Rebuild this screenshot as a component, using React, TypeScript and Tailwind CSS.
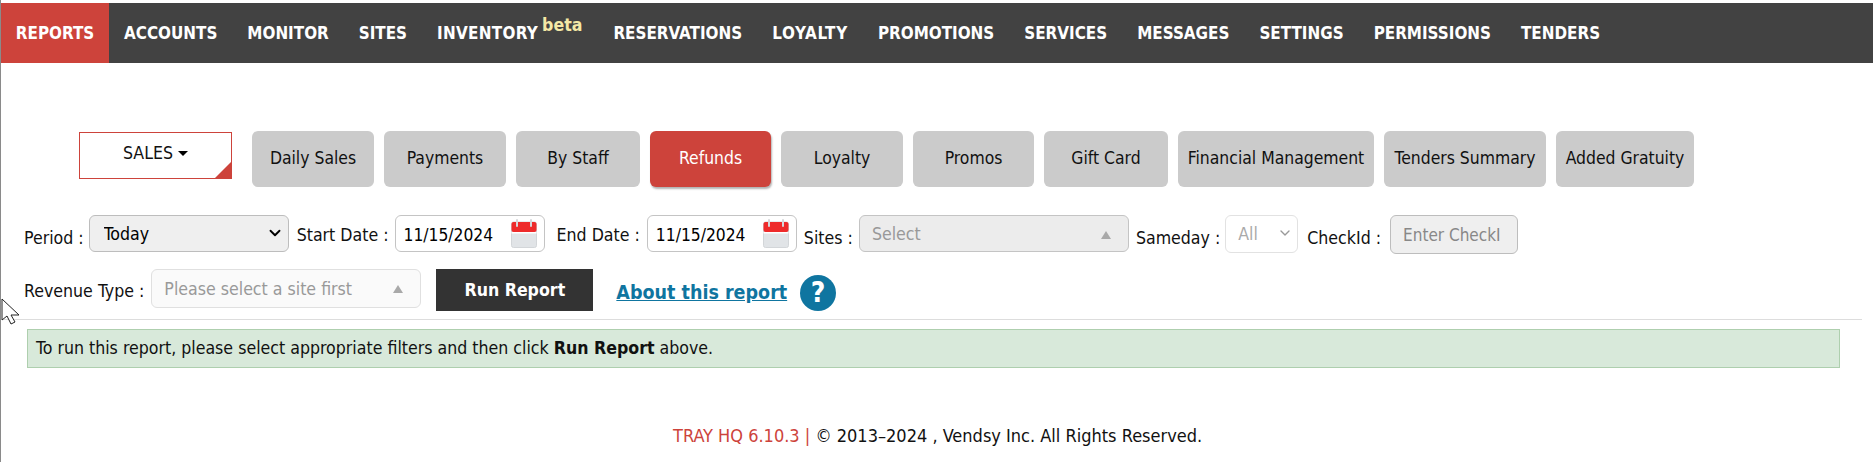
import React from 'react';
import { ChevronDown } from 'lucide-react';

const navItems = [
  { label: 'ACCOUNTS' },
  { label: 'MONITOR' },
  { label: 'SITES' },
  { label: 'INVENTORY', className: 'tracking-[0.3px]' },
  { label: 'RESERVATIONS' },
  { label: 'LOYALTY', className: 'tracking-[0.7px]' },
  { label: 'PROMOTIONS' },
  { label: 'SERVICES' },
  { label: 'MESSAGES' },
  { label: 'SETTINGS' },
  { label: 'PERMISSIONS' },
  { label: 'TENDERS' },
];

const tabs = [
  { label: 'Daily Sales', width: 'w-[122px]' },
  { label: 'Payments', width: 'w-[122px]' },
  { label: 'By Staff', width: 'w-[124px]' },
  { label: 'Refunds', width: 'w-[121px]', active: true },
  { label: 'Loyalty', width: 'w-[122px]' },
  { label: 'Promos', width: 'w-[121px]' },
  { label: 'Gift Card', width: 'w-[124px]' },
  { label: 'Financial Management', width: 'w-[196px]' },
  { label: 'Tenders Summary', width: 'w-[162px]' },
  { label: 'Added Gratuity', width: 'w-[138px]' },
];

const CalendarIcon = () => (
  <svg width="26" height="29" viewBox="0 0 26 29" className="absolute right-[8px] top-[4px]">
    <rect x="0.5" y="3" width="25" height="25.5" rx="2" fill="#e1e4e7" stroke="#d3d6d9" />
    <rect x="0.5" y="3" width="25" height="10" rx="2" fill="#ee2b2b" />
    <rect x="0.5" y="13" width="25" height="1.5" fill="#ffffff" />
    <rect x="5" y="0" width="2" height="8" rx="1" fill="#d5d7da" />
    <rect x="19" y="0" width="2" height="8" rx="1" fill="#d5d7da" />
  </svg>
);

const DateField = ({ value }: { value: string }) => (
  <div className="relative">
    <input
      readOnly
      value={value}
      className="w-[150px] h-[37px] pl-[8px] pt-[2px] bg-white border border-[#c4c4c4] rounded-[6px] text-[17.3px] text-black outline-none"
    />
    <CalendarIcon />
  </div>
);

const Caret = () => (
  <svg width="10" height="8" viewBox="0 0 10 8" className="absolute right-[17px] top-[15px]">
    <path d="M5 0 L10 8 L0 8 Z" fill="#a9a9a9" />
  </svg>
);

export default function App() {
  return (
    <div className="relative w-[1873px] h-[462px] bg-white border-l border-[#8a8a8a] overflow-hidden text-[17.6px] text-[#111] font-['DejaVu_Sans_Condensed','Liberation_Sans',sans-serif]">
      {/* Top nav */}
      <div className="mt-[3px] h-[60px] bg-[#424242] flex items-center text-white text-[16.9px] font-bold">
        <div className="h-full w-[108px] pt-[1px] bg-[#cd433b] flex items-center justify-center">REPORTS</div>
        <div className="flex items-center pt-[1px]">
          {navItems.map((item) => (
            <div key={item.label} className={`relative px-[15px] flex items-center ${item.className ?? ''}`}>
              {item.label}
              {item.label === 'INVENTORY' && (
                <span className="ml-[4px] mr-[1px] -mt-[17px] tracking-normal font-bold text-[#f4e8a6] text-[17.6px]">beta</span>
              )}
            </div>
          ))}
        </div>
      </div>

      {/* Report tabs */}
      <div className="mt-[68px] pl-[78px] flex items-start">
        <button className="relative mt-[1px] mr-[20px] w-[153px] h-[47px] border border-[#cd433b] bg-white flex items-center justify-center gap-[5px] overflow-hidden text-[17.6px] text-[#111]">
          <span className="-mt-[4px]">SALES</span>
          <span className="-mt-[4px] w-0 h-0 border-x-[5px] border-x-transparent border-t-[5px] border-t-black" />
          <span className="absolute right-0 bottom-0 w-0 h-0 border-l-[16px] border-l-transparent border-b-[16px] border-b-[#cd433b]" />
        </button>
        <div className="flex gap-[10px]">
          {tabs.map((tab) =>
            tab.active ? (
              <button key={tab.label} className={`${tab.width} h-[56px] pb-[2px] rounded-[6px] bg-[#cd433b] text-white text-[17.4px] shadow-[1px_2px_2px_rgba(0,0,0,0.3)]`}>
                {tab.label}
              </button>
            ) : (
              <button key={tab.label} className={`${tab.width} h-[56px] pb-[2px] rounded-[6px] bg-[#cbcbcb] text-[#111] text-[17.4px]`}>
                {tab.label}
              </button>
            )
          )}
        </div>
      </div>

      {/* Filters */}
      <div className="mt-[28px] pl-[23px] flex items-start">
        <span className="mt-[10px] mr-[5px]">Period :</span>
        <div className="relative mr-[8px]">
          <select className="appearance-none w-[200px] h-[37px] pl-[14px] pt-[2px] bg-[#efefef] border border-[#bdbdbd] rounded-[6px] text-[17.6px] text-black outline-none">
            <option>Today</option>
          </select>
          <ChevronDown className="absolute right-[5px] top-[9px] w-[18px] h-[18px] text-black" strokeWidth={2.5} />
        </div>
        <span className="mt-[7px] mr-[6px]">Start Date :</span>
        <div className="mr-[12px]"><DateField value="11/15/2024" /></div>
        <span className="mt-[7px] mr-[7px]">End Date :</span>
        <div className="mr-[7px]"><DateField value="11/15/2024" /></div>
        <span className="mt-[10px] mr-[6px]">Sites :</span>
        <div className="relative mr-[7px] w-[270px] h-[37px] pl-[12px] pt-[2px] flex items-center bg-[#ececec] border border-[#c4c4c4] rounded-[6px] text-[#999]">
          Select
          <Caret />
        </div>
        <span className="mt-[10px] mr-[5px]">Sameday :</span>
        <div className="relative mr-[9px]">
          <select disabled className="appearance-none w-[73px] h-[38px] pl-[12px] bg-white border border-[#e2e2e2] rounded-[6px] text-[17.6px] text-[#aaa] outline-none opacity-100">
            <option>All</option>
          </select>
          <ChevronDown className="absolute right-[5px] top-[10px] w-[16px] h-[16px] text-[#999]" />
        </div>
        <span className="mt-[10px] mr-[9px]">CheckId :</span>
        <input
          disabled
          placeholder="Enter CheckI"
          className="w-[128px] h-[39px] pl-[12px] bg-[#efefef] border border-[#bdbdbd] rounded-[6px] text-[17px] placeholder:text-[#888] outline-none"
        />
      </div>

      <div className="mt-[15px] pl-[23px] flex items-start">
        <span className="mt-[9px] mr-[7px]">Revenue Type :</span>
        <div className="relative mr-[15px] w-[270px] h-[39px] pl-[12px] pt-[2px] flex items-center bg-[#fafafa] border border-[#e0e0e0] rounded-[6px] text-[#999]">
          Please select a site first
          <Caret />
        </div>
        <button className="mr-[23px] w-[157px] h-[42px] bg-[#333] text-white font-bold">Run Report</button>
        <a href="#" className="mt-[9px] mr-[13px] text-[19.5px] font-bold text-[#0f75a0] underline">About this report</a>
        <span className="mt-[6px] w-[36px] h-[36px] rounded-full bg-[#0f75a0] text-white text-[28px] font-bold flex items-center justify-center">?</span>
      </div>

      <div className="mt-[8px] ml-[1px] mr-[11px] h-[1px] bg-[#dddddd]" />

      {/* Notice */}
      <div className="mt-[9px] ml-[26px] mr-[33px] h-[39px] pl-[8px] flex items-center bg-[#d8e9da] border border-[#aecfae] text-[#111]">
        <span>To run this report, please select appropriate filters and then click <b>Run Report</b> above.</span>
      </div>

      {/* Footer */}
      <div className="mt-[54px] pl-[672px] text-[18px] text-[#111]">
        <span className="text-[#cd433b]">TRAY HQ 6.10.3 | </span>© 2013–2024 , Vendsy Inc. All Rights Reserved.
      </div>

      {/* Mouse pointer captured in the shot */}
      <svg width="19" height="27" viewBox="0 0 19 27" className="absolute left-0 top-[298px]">
        <path d="M1 1 L1 22 L6 18 L10 26 L14 24 L10 17 L18 17 Z" fill="#fff" stroke="#222" strokeWidth="1" />
      </svg>
    </div>
  );
}
